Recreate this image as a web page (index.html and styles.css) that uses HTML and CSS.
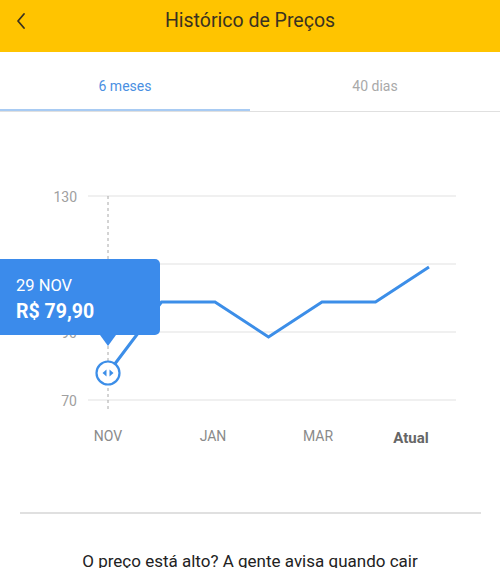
FILE: index.html
```html
<!DOCTYPE html>
<html lang="pt-BR">
<head>
<meta charset="utf-8">
<link rel="stylesheet" href="styles.css">
</head>
<body>
<header class="topbar">
  <button class="back" aria-label="Voltar">
    <svg width="12" height="18" viewBox="0 0 12 18"><path d="M9 2 L3 9 L9 16" fill="none" stroke="#3a3220" stroke-width="1.8" stroke-linecap="round" stroke-linejoin="round"/></svg>
  </button>
  <h1 class="title">Histórico de Preços</h1>
</header>
<nav class="tabs">
  <div class="tab active">6 meses</div>
  <div class="tab">40 dias</div>
</nav>
<section class="chart">
  <svg class="plot" width="500" height="350" viewBox="0 112 500 350">
    <g stroke="#e2e2e2" stroke-width="1.2">
      <line x1="88" y1="196" x2="456" y2="196"/>
      <line x1="88" y1="264" x2="456" y2="264"/>
      <line x1="88" y1="332" x2="456" y2="332"/>
      <line x1="88" y1="400" x2="456" y2="400"/>
    </g>
    <g class="ylab" text-anchor="end">
      <text x="77" y="202">130</text>
      <text x="77" y="338">90</text>
      <text x="77" y="406">70</text>
    </g>
    <line x1="108" y1="196" x2="108" y2="410" stroke="#a8a8a8" stroke-width="1" stroke-dasharray="3 3"/>
    <polyline points="108,373 161.5,302 215,302 268.5,337 322,302 375.5,302 429,267" fill="none" stroke="#3c8ee8" stroke-width="3" stroke-linejoin="miter"/>
    <circle cx="108" cy="373" r="11.5" fill="#fff" stroke="#3c8ee8" stroke-width="2.2"/>
    <path d="M106.5 369.5 L102.5 373 L106.5 376.5 Z M109.5 369.5 L113.5 373 L109.5 376.5 Z" fill="#3c8ee8"/>
    <g class="xlab" text-anchor="middle">
      <text x="108" y="441">NOV</text>
      <text x="213" y="441">JAN</text>
      <text x="318" y="441">MAR</text>
      <text class="now" x="411" y="443">Atual</text>
    </g>
  </svg>
  <div class="tooltip">
    <div class="tip-date">29 NOV</div>
    <div class="tip-price">R$ 79,90</div>
  </div>
</section>
<hr class="divider">
<p class="alert">O preço está alto? A gente avisa quando cair</p>
</body>
</html>
```
FILE: styles.css
```css
* { box-sizing: border-box; }
html, body { margin: 0; padding: 0; background: #fff; }
body {
  width: 500px;
  height: 568px;
  overflow: hidden;
  font-family: Roboto, "Liberation Sans", sans-serif;
}
.topbar {
  height: 52px;
  background: #ffc400;
  display: flex;
  align-items: center;
  justify-content: center;
  position: relative;
}
.back {
  position: absolute;
  left: 13px;
  top: 11px;
  width: 16px;
  height: 20px;
  padding: 0;
  border: 0;
  background: none;
  display: flex;
  align-items: center;
  justify-content: center;
}
.title {
  margin: 0;
  margin-top: -12px;
  font-size: 19.5px;
  font-weight: 400;
  color: #3a3220;
}
.tabs {
  display: flex;
  height: 60px;
  border-bottom: 1px solid #e0e0e0;
}
.tab {
  flex: 1;
  display: flex;
  align-items: center;
  justify-content: center;
  padding-top: 8px;
  font-size: 14px;
  color: #a9a9a9;
}
.tab.active {
  color: #4a90e2;
  box-shadow: inset 0 -2px 0 #a8cbf3;
}
.chart {
  position: relative;
  height: 350px;
}
.plot { display: block; }
.ylab text {
  font-family: Roboto, "Liberation Sans", sans-serif;
  font-size: 14px;
  fill: #a0a0a0;
}
.xlab text {
  font-family: Roboto, "Liberation Sans", sans-serif;
  font-size: 14px;
  fill: #8a8a8a;
}
.xlab .now {
  font-weight: 700;
  fill: #666;
  font-size: 15px;
}
.tooltip {
  position: absolute;
  left: 0;
  top: 147px;
  width: 160px;
  height: 76px;
  background: #3b8beb;
  border-radius: 0 5px 5px 0;
  padding: 17px 0 0 16px;
  color: #fff;
}
.tooltip::after {
  content: "";
  position: absolute;
  left: 100px;
  bottom: -11px;
  border-left: 8px solid transparent;
  border-right: 8px solid transparent;
  border-top: 11px solid #3b8beb;
}
.tip-date {
  font-size: 16.5px;
  line-height: 19px;
}
.tip-price {
  margin-top: 6px;
  font-size: 19.5px;
  font-weight: 700;
  line-height: 21px;
}
.divider {
  margin: 50px 19px 0 20px;
  border: 0;
  height: 2px;
  background: #e0e0e0;
}
.alert {
  margin: 37px 0 0;
  text-align: center;
  font-size: 17px;
  color: #222;
}
```
